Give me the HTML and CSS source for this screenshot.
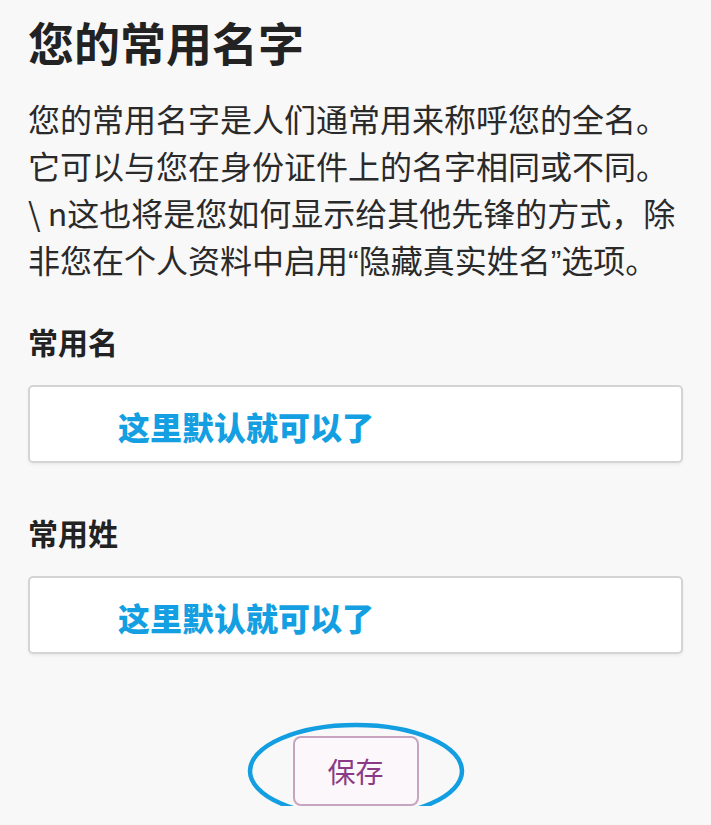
FILE: index.html
```html
<!DOCTYPE html>
<html lang="zh-CN">
<head>
    <meta charset="UTF-8">
    <meta name="viewport" content="width=device-width, initial-scale=1.0">
    <title>您的常用名字</title>
    <link rel="stylesheet" href="styles.css">
</head>
<body>
    <main class="page">
        <h1 class="title">您的常用名字</h1>
        <p class="intro">
            您的常用名字是人们通常用来称呼您的全名。<br>
            它可以与您在身份证件上的名字相同或不同。<br>
            \ n这也将是您如何显示给其他先锋的方式，除<br>
            非您在个人资料中启用<span class="quote">“</span>隐藏真实姓名<span class="quote">”</span>选项。
        </p>

        <div class="field">
            <label class="field-label">常用名</label>
            <div class="field-box">这里默认就可以了</div>
        </div>

        <div class="field">
            <label class="field-label">常用姓</label>
            <div class="field-box">这里默认就可以了</div>
        </div>

        <div class="actions">
            <button class="save-btn">保存</button>
            <!-- hand-drawn highlight around the button -->
            <svg class="circle-mark" width="222" height="102" viewBox="0 0 222 102">
                <ellipse cx="111" cy="51" rx="106" ry="46" fill="none" stroke="#129ee0" stroke-width="4.5"/>
            </svg>
        </div>
    </main>
</body>
</html>
```

FILE: styles.css
```css
body {
    margin: 0;
    padding: 0;
    background-color: #f8f8f9;
    font-family: "Noto Sans CJK SC", "Noto Sans", sans-serif;
    color: #222;
}

.page {
    padding: 14px 28px 0 28px;
}

.title {
    font-size: 46px;
    font-weight: 700;
    line-height: 54px;
    margin: 0 0 27px 0;
}

.intro {
    font-size: 32px;
    line-height: 47px;
    margin: 0 0 35px 0;
    color: #2a2a2a;
    white-space: nowrap;
}

.quote {
    font-family: "Liberation Sans", sans-serif;
}

.field {
    margin-bottom: 49px;
}

.field-label {
    display: block;
    font-size: 30px;
    font-weight: 700;
    line-height: 40px;
    margin-bottom: 24px;
}

.field-box {
    box-sizing: border-box;
    height: 78px;
    background: #fff;
    border: 2px solid #d4d4d4;
    border-radius: 5px;
    box-shadow: 0 2px 3px rgba(0, 0, 0, 0.05);
    padding: 6px 0 0 88px;
    font-size: 32px;
    font-weight: 900;
    color: #139fe1;
    line-height: 66px;
}

.actions {
    position: relative;
    display: flex;
    justify-content: center;
    padding-top: 33px;
}

.save-btn {
    width: 126px;
    height: 70px;
    background: #fbf7fa;
    border: 2px solid #c7a5c0;
    border-radius: 8px;
    font-family: "Noto Sans CJK SC", sans-serif;
    font-size: 28px;
    color: #8b3b86;
}

.circle-mark {
    position: absolute;
    left: 50%;
    margin-left: -111px;
    top: 17px;
}
```
